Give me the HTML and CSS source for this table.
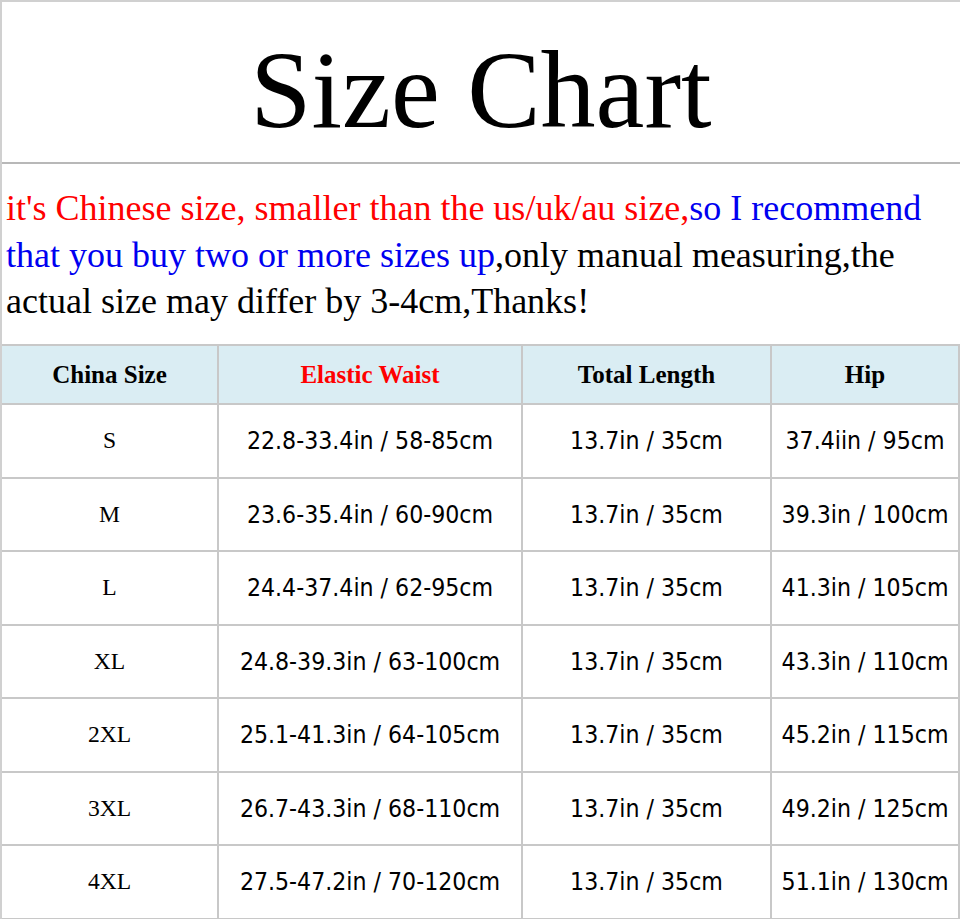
FILE: index.html
```html
<!DOCTYPE html>
<html>
<head>
<meta charset="utf-8">
<link rel="stylesheet" href="styles.css">
</head>
<body>
<div class="page">
  <header class="title-box"><h1 class="title">Size Chart</h1></header>
  <p class="note"><span class="red">it's Chinese size, smaller than the us/uk/au size,</span><span class="blue">so I recommend that you buy two or more sizes up</span>,only manual measuring,the actual size may differ by 3-4cm,Thanks!</p>
  <table class="chart">
    <colgroup>
      <col class="c1"><col class="c2"><col class="c3"><col class="c4">
    </colgroup>
    <thead>
      <tr><th>China Size</th><th class="red">Elastic Waist</th><th>Total Length</th><th>Hip</th></tr>
    </thead>
    <tbody>
      <tr><td class="size">S</td><td>22.8-33.4in / 58-85cm</td><td>13.7in / 35cm</td><td>37.4iin / 95cm</td></tr>
      <tr><td class="size">M</td><td>23.6-35.4in / 60-90cm</td><td>13.7in / 35cm</td><td>39.3in / 100cm</td></tr>
      <tr><td class="size">L</td><td>24.4-37.4in / 62-95cm</td><td>13.7in / 35cm</td><td>41.3in / 105cm</td></tr>
      <tr><td class="size">XL</td><td>24.8-39.3in / 63-100cm</td><td>13.7in / 35cm</td><td>43.3in / 110cm</td></tr>
      <tr><td class="size">2XL</td><td>25.1-41.3in / 64-105cm</td><td>13.7in / 35cm</td><td>45.2in / 115cm</td></tr>
      <tr><td class="size">3XL</td><td>26.7-43.3in / 68-110cm</td><td>13.7in / 35cm</td><td>49.2in / 125cm</td></tr>
      <tr><td class="size">4XL</td><td>27.5-47.2in / 70-120cm</td><td>13.7in / 35cm</td><td>51.1in / 130cm</td></tr>
    </tbody>
  </table>
</div>
</body>
</html>
```
FILE: styles.css
```css
html, body { margin: 0; padding: 0; background: #fff; }
.page {
  width: 960px;
  height: 919px;
  overflow: hidden;
  box-sizing: border-box;
  border-top: 2px solid #d0d0d0;
  border-left: 2px solid #d0d0d0;
  font-family: "Liberation Serif", "Times New Roman", serif;
  color: #000;
}
.title-box {
  height: 160px;
  border-bottom: 2px solid #b8b8b8;
  display: flex;
  align-items: center;
  justify-content: center;
}
.title {
  margin: 0;
  font-weight: normal;
  font-size: 110px;
  line-height: 1;
  padding-top: 16px;
}
.note {
  margin: 0;
  height: 180px;
  box-sizing: border-box;
  padding: 21px 0 0 4px;
  font-size: 36px;
  line-height: 46.5px;
}
.red { color: #f00; }
.blue { color: #0000f0; }
.chart {
  border-collapse: collapse;
  width: 958px;
  margin-left: -2px;
  table-layout: fixed;
}
.c1 { width: 217px; }
.c2 { width: 304px; }
.c3 { width: 249px; }
.c4 { width: 188px; }
.chart th, .chart td {
  border: 2px solid #c8c8c8;
  text-align: center;
  padding: 0;
}
.chart th {
  background: #daedf3;
  height: 57px;
  font-weight: bold;
  font-size: 25px;
}
.chart td {
  height: 71.5px;
  font-family: "DejaVu Sans Condensed", "DejaVu Sans", sans-serif;
  font-size: 24.6px;
}
.chart td.size {
  font-family: "Liberation Serif", serif;
  font-size: 23.6px;
}
```
